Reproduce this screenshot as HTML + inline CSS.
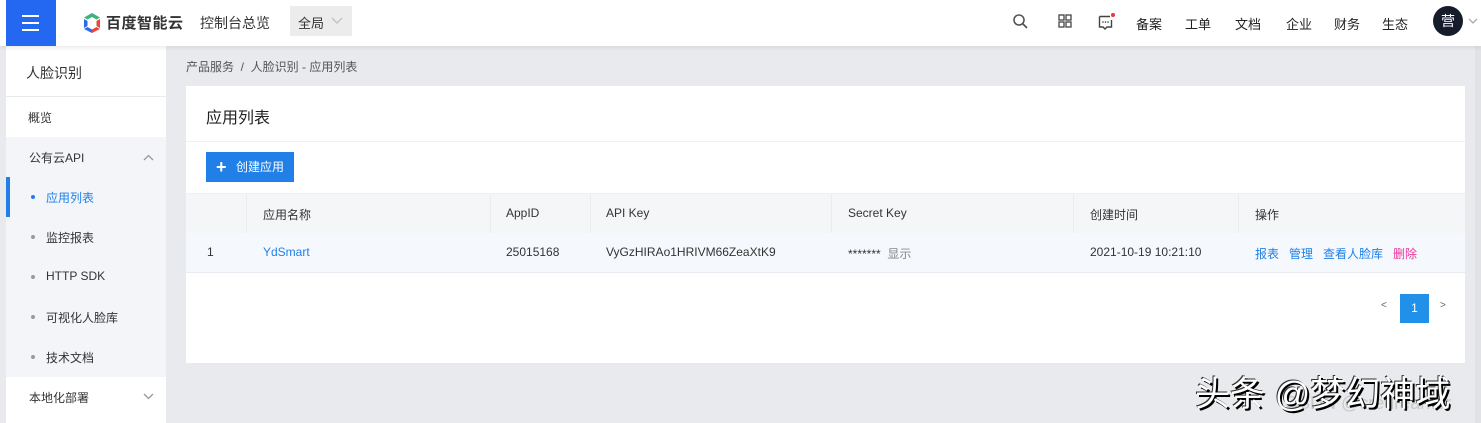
<!DOCTYPE html>
<html><head><meta charset="utf-8"><style>
*{margin:0;padding:0;box-sizing:border-box}
body{width:1481px;height:423px;overflow:hidden;background:#e8eaee;font-family:"Liberation Sans","Noto Sans CJK SC",sans-serif;font-size:12px;color:#333;position:relative}
.top{position:absolute;left:0;top:0;width:1481px;height:46px;background:#fff;box-shadow:0 2px 4px rgba(0,0,0,.08);z-index:2}
.ham{position:absolute;left:6px;top:0;width:50px;height:46px;background:#2468f2}
.ham i{position:absolute;left:16px;width:17px;height:2px;background:#fff}
.abs{position:absolute;white-space:nowrap}
.side{position:absolute;left:6px;top:46px;width:160px;height:377px;background:#fff}
.sec{position:absolute;left:0;top:91px;width:160px;height:240px;background:#f4f5f9}
.card{position:absolute;left:186px;top:86px;width:1279px;height:277px;background:#fff}
.th{position:absolute;top:107px;height:40px;left:0;width:1279px;background:#f5f6f8;border-top:1px solid #eef0f3}
.tr{position:absolute;top:147px;height:40px;left:0;width:1279px;background:#f5f9fd;border-bottom:1px solid #e8ebf0}
.col{position:absolute;top:12px;font-size:12px;white-space:nowrap}
.sep{position:absolute;top:0;width:1px;height:40px;background:#e9ecf0}
.blue{color:#2080e8}
.dot{position:absolute;left:25px;width:4px;height:4px;border-radius:2px;background:#999}
</style></head><body>
<div class="top">
 <div class="ham"><i style="top:15px"></i><i style="top:22px"></i><i style="top:29px"></i></div>
 <svg class="abs" style="left:82px;top:12px" width="20" height="22" viewBox="0 0 20 22"><path d="M10 1 L18 5.5 L14.5 7.5 L10 5 L5.5 7.5 L2 5.5Z" fill="#3eb37b"/><path d="M2 7 L5.5 9 V14 L2 16Z" fill="#2a6af0"/><path d="M18 7 L14.5 9 V14 L18 16Z" fill="#e8473a"/><path d="M2 17 L5.5 15 L10 17.5 V21 Z" fill="#2a6af0"/><path d="M18 17 L14.5 15 L10 17.5 V21Z" fill="#e8473a"/></svg>
 <div class="abs" style="left:106px;top:12px;font-size:15px;font-weight:bold;color:#333;letter-spacing:0.5px">百度智能云</div>
 <div class="abs" style="left:200px;top:13px;font-size:14px;color:#333">控制台总览</div>
 <div class="abs" style="left:290px;top:6px;width:62px;height:30px;background:#ececec"><span class="abs" style="left:8px;top:7px;font-size:13px">全局</span><svg class="abs" style="left:41px;top:11px" width="12" height="8"><path d="M1 1 L6 6 L11 1" fill="none" stroke="#c4c4c4" stroke-width="1.5"/></svg></div>
 <svg class="abs" style="left:1013px;top:14px" width="15" height="15"><circle cx="6" cy="6" r="5" stroke="#555" stroke-width="1.6" fill="none"/><line x1="10" y1="10" x2="14" y2="14" stroke="#555" stroke-width="1.8"/></svg>
 <svg class="abs" style="left:1058px;top:14px" width="14" height="14"><rect x="1" y="1" width="5" height="5" fill="none" stroke="#444" stroke-width="1.3"/><rect x="8" y="1" width="5" height="5" fill="none" stroke="#444" stroke-width="1.3"/><rect x="1" y="8" width="5" height="5" fill="none" stroke="#444" stroke-width="1.3"/><rect x="8" y="8" width="5" height="5" fill="none" stroke="#444" stroke-width="1.3"/></svg>
 <svg class="abs" style="left:1098px;top:12px" width="20" height="18"><path d="M1.5 4.5 H12 M1.5 4.5 V15 H5 L7 17 L9 15 H13.5 V8" fill="none" stroke="#444" stroke-width="1.4"/><circle cx="5" cy="10" r=".8" fill="#333"/><circle cx="7.5" cy="10" r=".8" fill="#333"/><circle cx="10" cy="10" r=".8" fill="#333"/><circle cx="15" cy="3" r="2" fill="#e8343a"/></svg>
 <div class="abs" style="left:1136px;top:14px;font-size:13px;color:#222">备案</div>
 <div class="abs" style="left:1185px;top:14px;font-size:13px;color:#222">工单</div>
 <div class="abs" style="left:1235px;top:14px;font-size:13px;color:#222">文档</div>
 <div class="abs" style="left:1286px;top:14px;font-size:13px;color:#222">企业</div>
 <div class="abs" style="left:1334px;top:14px;font-size:13px;color:#222">财务</div>
 <div class="abs" style="left:1382px;top:14px;font-size:13px;color:#222">生态</div>
 <div class="abs" style="left:1433px;top:6px;width:30px;height:30px;border-radius:15px;background:#161c2b;color:#fff;font-size:14px;text-align:center;line-height:30px">营</div>
 <svg class="abs" style="left:1468px;top:18px" width="10" height="7"><path d="M1 1 L5 5 L9 1" fill="none" stroke="#aaa" stroke-width="1.3"/></svg>
</div>
<div class="side">
 <div class="abs" style="left:20px;top:17px;font-size:14px;color:#333">人脸识别</div>
 <div class="abs" style="left:0;top:50px;width:160px;height:1px;background:#e8eaee"></div>
 <div class="abs" style="left:22px;top:63px;font-size:12px">概览</div>
 <div class="sec">
  <div class="abs" style="left:23px;top:12px">公有云API</div>
  <svg class="abs" style="left:137px;top:17px" width="11" height="7"><path d="M1 6 L5.5 1.5 L10 6" fill="none" stroke="#999" stroke-width="1.3"/></svg>
  <div class="abs" style="left:0;top:40px;width:4px;height:40px;background:#2080e8"></div>
  <div class="dot" style="top:58px;background:#2080e8"></div><div class="abs blue" style="left:40px;top:52px">应用列表</div>
  <div class="dot" style="top:98px"></div><div class="abs" style="left:40px;top:92px">监控报表</div>
  <div class="dot" style="top:138px"></div><div class="abs" style="left:40px;top:132px">HTTP SDK</div>
  <div class="dot" style="top:178px"></div><div class="abs" style="left:40px;top:172px">可视化人脸库</div>
  <div class="dot" style="top:218px"></div><div class="abs" style="left:40px;top:212px">技术文档</div>
 </div>
 <div class="abs" style="left:23px;top:343px">本地化部署</div>
 <svg class="abs" style="left:137px;top:347px" width="11" height="7"><path d="M1 1 L5.5 5.5 L10 1" fill="none" stroke="#999" stroke-width="1.3"/></svg>
</div>
<div class="abs" style="left:186px;top:58px;color:#555">产品服务 &nbsp;/&nbsp; 人脸识别 - 应用列表</div>
<div class="card">
 <div class="abs" style="left:20px;top:18px;font-size:16px;color:#222">应用列表</div>
 <div class="abs" style="left:0;top:55px;width:1279px;height:1px;background:#eef0f3"></div>
 <div class="abs" style="left:20px;top:66px;width:88px;height:30px;background:#2080e8;color:#fff;font-size:12px;line-height:30px;padding-left:30px">创建应用<span class="abs" style="left:10px;top:0;font-size:18px;font-weight:bold">+</span></div>
 <div class="th">
  <div class="sep" style="left:60px"></div><div class="sep" style="left:304px"></div><div class="sep" style="left:404px"></div><div class="sep" style="left:645px"></div><div class="sep" style="left:887px"></div><div class="sep" style="left:1052px"></div>
  <div class="col" style="left:77px">应用名称</div><div class="col" style="left:320px">AppID</div><div class="col" style="left:420px">API Key</div><div class="col" style="left:662px">Secret Key</div><div class="col" style="left:904px">创建时间</div><div class="col" style="left:1069px">操作</div>
 </div>
 <div class="tr">
  <div class="col" style="left:21px">1</div><div class="col blue" style="left:77px">YdSmart</div><div class="col" style="left:320px">25015168</div><div class="col" style="left:420px">VyGzHIRAo1HRIVM66ZeaXtK9</div><div class="col" style="left:662px">******* &nbsp;<span style="color:#888">显示</span></div><div class="col" style="left:904px">2021-10-19 10:21:10</div>
  <div class="col blue" style="left:1069px">报表</div><div class="col blue" style="left:1103px">管理</div><div class="col blue" style="left:1137px">查看人脸库</div><div class="col" style="left:1207px;color:#e8359a">删除</div>
 </div>
 <div class="abs" style="left:1195px;top:214px;color:#666;font-size:10px">&lt;</div>
 <div class="abs" style="left:1214px;top:208px;width:29px;height:29px;background:#2090e8;color:#fff;text-align:center;line-height:29px">1</div>
 <div class="abs" style="left:1254px;top:214px;color:#666;font-size:10px">&gt;</div>
</div>
<div class="abs" style="left:1475px;top:46px;width:6px;height:377px;background:#e0e2e6"></div>
<div class="abs" style="left:1285px;top:393px;color:#c8c8c8;font-size:18px">CSDN @credreamer</div>
<div class="abs" style="left:1195px;top:366px;color:#fff;font-size:35px;text-shadow:2px 2px 0 #000,-1px -1px 0 #333">头条 @梦幻神域</div>
</body></html>
